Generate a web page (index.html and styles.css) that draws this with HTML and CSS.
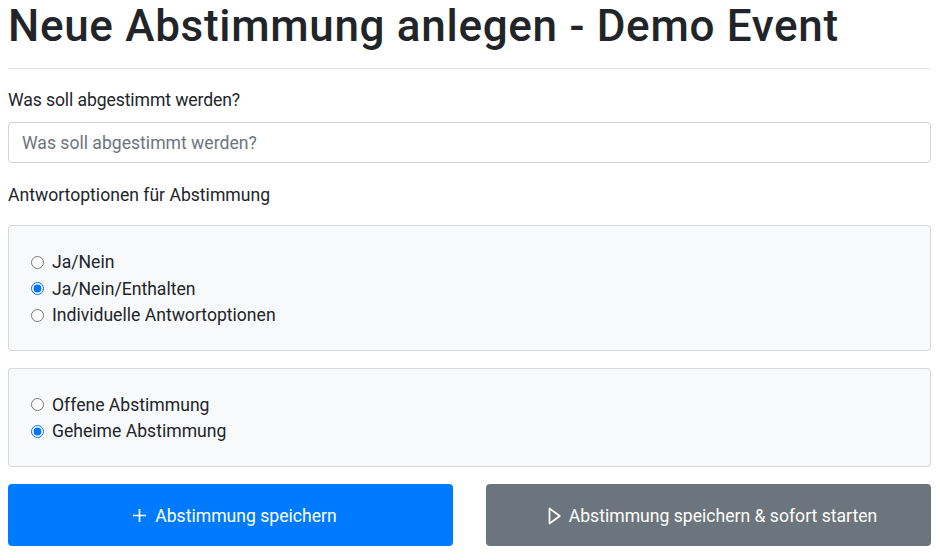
FILE: index.html
```html
<!DOCTYPE html>
<html lang="de">
<head>
<meta charset="utf-8">
<title>Neue Abstimmung anlegen - Demo Event</title>
<link rel="stylesheet" href="styles.css">
</head>
<body>
<div class="page">
  <h1 class="title">Neue Abstimmung anlegen - Demo Event</h1>
  <hr class="divider">
  <form class="poll-form">
    <label class="field-label" for="question">Was soll abgestimmt werden?</label>
    <input class="text-input" id="question" type="text" placeholder="Was soll abgestimmt werden?">
    <div class="section-label">Antwortoptionen für Abstimmung</div>
    <div class="option-card">
      <label class="radio-row"><input type="radio" name="answers" class="radio"><span>Ja/Nein</span></label>
      <label class="radio-row"><input type="radio" name="answers" class="radio" checked><span>Ja/Nein/Enthalten</span></label>
      <label class="radio-row"><input type="radio" name="answers" class="radio"><span>Individuelle Antwortoptionen</span></label>
    </div>
    <div class="option-card">
      <label class="radio-row"><input type="radio" name="secret" class="radio"><span>Offene Abstimmung</span></label>
      <label class="radio-row"><input type="radio" name="secret" class="radio" checked><span>Geheime Abstimmung</span></label>
    </div>
    <div class="actions">
      <button type="button" class="btn btn-primary">
        <svg class="btn-icon" viewBox="0 0 16 16" width="16" height="16"><path d="M8 1v14M1 8h14" stroke="currentColor" stroke-width="1.8" fill="none"/></svg>
        <span>Abstimmung speichern</span>
      </button>
      <button type="button" class="btn btn-secondary">
        <svg class="btn-icon btn-icon-play" viewBox="0 0 13 18" width="13" height="18"><path d="M1.5 1.5L11.8 9 1.5 16.5Z" stroke="currentColor" stroke-width="1.7" stroke-linejoin="round" fill="none"/></svg>
        <span>Abstimmung speichern &amp; sofort starten</span>
      </button>
    </div>
  </form>
</div>
</body>
</html>
```
FILE: styles.css
```css
* { box-sizing: border-box; }
body {
  margin: 0;
  font-family: Roboto, "Noto Sans", sans-serif;
  font-size: 17.6px;
  color: #212529;
  background: #fff;
}
.page {
  padding: 0 9px 0 8px;
}
.title {
  margin: 0;
  font-size: 44px;
  font-weight: 500;
  line-height: 53px;
  letter-spacing: 0.7px;
}
.divider {
  margin: 15px 0 0;
  border: 0;
  border-top: 1px solid rgba(0,0,0,.1);
}
.poll-form {
  display: flex;
  flex-direction: column;
}
.field-label {
  margin-top: 18px;
  line-height: 26px;
  letter-spacing: -0.1px;
}
.text-input {
  margin-top: 9px;
  height: 41px;
  padding: 6px 13px;
  font: inherit;
  color: #495057;
  border: 1px solid #ced4da;
  border-radius: 4px;
}
.text-input::placeholder { color: #6c757d; opacity: 1; }
.section-label {
  margin-top: 19px;
  line-height: 26px;
}
.option-card {
  margin-top: 17px;
  padding: 23px 22px 21px;
  background: #f8f9fa;
  border: 1px solid rgba(0,0,0,.125);
  border-radius: 4px;
  display: flex;
  flex-direction: column;
}
.option-card + .option-card { margin-top: 17px; }
.radio-row {
  display: flex;
  align-items: center;
  height: 26.5px;
}
.radio {
  margin: 0 8px 0 0;
  width: 13px;
  height: 13px;
  accent-color: #0075ff;
}
.actions {
  margin-top: 17px;
  display: grid;
  grid-template-columns: 1fr 1fr;
  column-gap: 33px;
}
.btn {
  height: 62px;
  border: 0;
  border-radius: 4px;
  color: #fff;
  font: inherit;
  display: flex;
  align-items: center;
  justify-content: center;
  gap: 8px;
  padding: 2px 0 0 8px;
}
.btn-primary { background: #007bff; }
.btn-secondary { background: #6c757d; }
.btn-icon { width: 15px; height: 15px; }
.btn-icon-play { width: 13px; height: 18px; }
```
